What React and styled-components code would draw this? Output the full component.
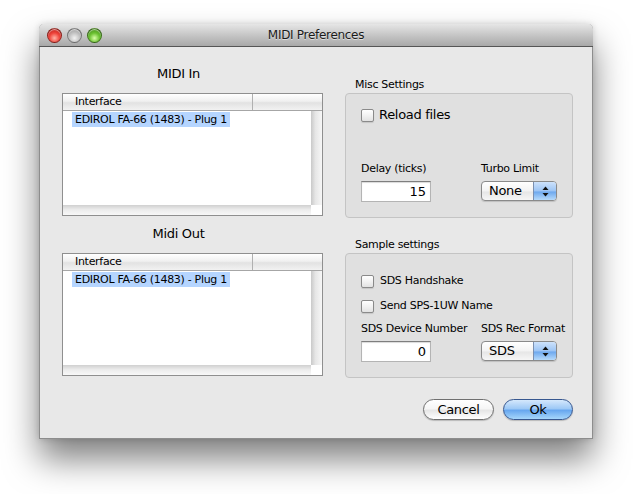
import React from "react";
import styled, { createGlobalStyle } from "styled-components";

const GlobalStyle = createGlobalStyle`
  html, body {
    margin: 0;
    padding: 0;
    background: #ffffff;
  }
  body {
    font-family: "DejaVu Sans", "Liberation Sans", sans-serif;
    color: #000000;
  }
`;

const ArrowsIcon = () => (
  <svg width="7" height="11" viewBox="0 0 7 11">
    <path d="M3.5 0.5 L6.5 4 L0.5 4 Z" fill="#111" />
    <path d="M3.5 10.5 L6.5 7 L0.5 7 Z" fill="#111" />
  </svg>
);

function ListBox({ item }) {
  return (
    <List>
      <ListHeader>
        <HeaderCell $wide>Interface</HeaderCell>
        <HeaderCell />
      </ListHeader>
      <ListBody>
        <ListContent>
          <Row>
            <Selected>{item}</Selected>
          </Row>
        </ListContent>
        <VScroll />
        <HScroll />
        <Corner />
      </ListBody>
    </List>
  );
}

function Checkbox({ label, big }) {
  return (
    <CheckRow $big={big}>
      <CheckBoxMark $big={big} />
      <span>{label}</span>
    </CheckRow>
  );
}

function Popup({ value }) {
  return (
    <PopupButton>
      <PopupText>{value}</PopupText>
      <PopupArrows>
        <ArrowsIcon />
      </PopupArrows>
    </PopupButton>
  );
}

export default function App() {
  return (
    <Page>
      <GlobalStyle />
      <Window>
        <TitleBar>
          <Lights>
            <Light $color="red" />
            <Light $color="gray" />
            <Light $color="green" />
          </Lights>
          <Title>MIDI Preferences</Title>
          <span />
        </TitleBar>
        <Content>
          <Grid>
            <ListLabel>MIDI In</ListLabel>
            <GroupLabel>Misc Settings</GroupLabel>
            <ListBox item="EDIROL FA-66 (1483) - Plug 1" />
            <GroupBox $pad="14px 16px 15px 15px">
              <Checkbox big label="Reload files" />
              <FieldGrid>
                <Field>
                  <SmallLabel>Delay (ticks)</SmallLabel>
                  <TextInput>15</TextInput>
                </Field>
                <Field>
                  <SmallLabel>Turbo Limit</SmallLabel>
                  <Popup value="None" />
                </Field>
              </FieldGrid>
            </GroupBox>
            <ListLabel>Midi Out</ListLabel>
            <GroupLabel>Sample settings</GroupLabel>
            <ListBox item="EDIROL FA-66 (1483) - Plug 1" />
            <GroupBox $pad="20px 16px 15px 15px">
              <Checks>
                <Checkbox label="SDS Handshake" />
                <Checkbox label="Send SPS-1UW Name" />
              </Checks>
              <FieldGrid>
                <Field>
                  <SmallLabel>SDS Device Number</SmallLabel>
                  <TextInput>0</TextInput>
                </Field>
                <Field>
                  <SmallLabel>SDS Rec Format</SmallLabel>
                  <Popup value="SDS" />
                </Field>
              </FieldGrid>
            </GroupBox>
          </Grid>
          <Buttons>
            <PillButton>Cancel</PillButton>
            <PillButton $primary>Ok</PillButton>
          </Buttons>
        </Content>
      </Window>
    </Page>
  );
}

const Page = styled.div`
  width: 633px;
  height: 494px;
  padding: 24px 0 0 39px;
  box-sizing: border-box;
  overflow: hidden;
  background: #ffffff;
`;

const Window = styled.div`
  width: 554px;
  height: 415px;
  display: flex;
  flex-direction: column;
  box-sizing: border-box;
  background: #e8e8e8;
  border: 1px solid #8d8d8d;
  border-top: none;
  border-radius: 5px 5px 0 0;
  box-shadow: 0 20px 34px rgba(0, 0, 0, 0.5), 0 0 6px rgba(0, 0, 0, 0.15);
`;

const TitleBar = styled.div`
  height: 23px;
  display: grid;
  grid-template-columns: 1fr auto 1fr;
  align-items: center;
  box-sizing: border-box;
  border-bottom: 1px solid #555555;
  border-radius: 5px 5px 0 0;
  background: linear-gradient(#e6e6e6, #c6c6c6 50%, #a8a8a8);
  margin: 0 -1px;
`;

const Lights = styled.div`
  display: flex;
  gap: 5px;
  padding-left: 8px;
`;

const lightColors = {
  red: "radial-gradient(circle at 50% 70%, #ffb3a6 0%, #f0453c 45%, #a80f0a 100%)",
  gray: "radial-gradient(circle at 50% 70%, #f2f2f2 0%, #c4c4c4 45%, #8e8e8e 100%)",
  green: "radial-gradient(circle at 50% 70%, #d9ffa8 0%, #6cc232 45%, #357a10 100%)",
};

const Light = styled.div`
  width: 15px;
  height: 15px;
  border-radius: 50%;
  box-sizing: border-box;
  border: 1px solid rgba(0, 0, 0, 0.35);
  background: ${(p) => lightColors[p.$color]};
  box-shadow: inset 0 1px 1px rgba(255, 255, 255, 0.6);
`;

const Title = styled.div`
  font-size: 12px;
  letter-spacing: -0.3px;
  color: #1a1a1a;
  text-shadow: 0 1px 0 rgba(255, 255, 255, 0.5);
`;

const Content = styled.div`
  flex: 1;
  display: flex;
  flex-direction: column;
  padding: 22px 19px 18px 22px;
`;

const Grid = styled.div`
  display: grid;
  grid-template-columns: 261px 228px;
  grid-template-rows: 24px 125px 35px 125px;
  column-gap: 22px;
`;

const ListLabel = styled.div`
  align-self: end;
  padding: 0 28px 11px 0;
  text-align: center;
  font-size: 13px;
  line-height: 16px;
  letter-spacing: -0.3px;
`;

const GroupLabel = styled.div`
  align-self: end;
  padding: 0 0 1px 10px;
  font-size: 11px;
  line-height: 14px;
  letter-spacing: -0.3px;
`;

const List = styled.div`
  height: 123px;
  display: flex;
  flex-direction: column;
  box-sizing: border-box;
  border: 1px solid #8f8f8f;
  background: #ffffff;
`;

const ListHeader = styled.div`
  height: 16px;
  display: flex;
  border-bottom: 1px solid #a6a6a6;
  background: linear-gradient(#ffffff, #f0f0f0 45%, #e2e2e2 55%, #f2f2f2);
`;

const HeaderCell = styled.div`
  width: ${(p) => (p.$wide ? "190px" : "auto")};
  flex: ${(p) => (p.$wide ? "none" : "1")};
  box-sizing: border-box;
  border-right: ${(p) => (p.$wide ? "1px solid #b0b0b0" : "none")};
  padding-left: 12px;
  font-size: 11px;
  line-height: 16px;
  letter-spacing: -0.3px;
`;

const ListBody = styled.div`
  flex: 1;
  display: grid;
  grid-template-columns: 1fr 11px;
  grid-template-rows: 1fr 10px;
`;

const ListContent = styled.div`
  padding-top: 1px;
`;

const Row = styled.div`
  height: 15px;
  display: flex;
  padding-left: 9px;
`;

const Selected = styled.span`
  display: block;
  padding: 0 3px;
  background: #b5d5ff;
  font-size: 11px;
  line-height: 15px;
  letter-spacing: -0.3px;
`;

const VScroll = styled.div`
  background: linear-gradient(90deg, #c9c9c9, #e6e6e6 40%, #f7f7f7);
`;

const HScroll = styled.div`
  background: linear-gradient(#d0d0d0, #ebebeb 45%, #f8f8f8);
`;

const Corner = styled.div`
  background: #ffffff;
`;

const GroupBox = styled.div`
  display: flex;
  flex-direction: column;
  justify-content: space-between;
  box-sizing: border-box;
  padding: ${(p) => p.$pad};
  border: 1px solid #c4c4c4;
  border-radius: 4px;
  background: #e0e0e0;
`;

const Checks = styled.div`
  display: flex;
  flex-direction: column;
  gap: 11px;
`;

const CheckRow = styled.div`
  display: flex;
  align-items: center;
  gap: ${(p) => (p.$big ? "5px" : "6px")};
  font-size: ${(p) => (p.$big ? "13px" : "11px")};
  letter-spacing: -0.3px;
  line-height: 14px;
`;

const CheckBoxMark = styled.div`
  width: 13px;
  height: 13px;
  box-sizing: border-box;
  border: 1px solid #8a8a8a;
  border-radius: 2px;
  background: linear-gradient(#ffffff, #f2f2f2 50%, #e2e2e2);
  box-shadow: 0 1px 1px rgba(0, 0, 0, 0.12);
`;

const FieldGrid = styled.div`
  display: grid;
  grid-template-columns: 120px 1fr;
`;

const Field = styled.div`
  display: flex;
  flex-direction: column;
  gap: 5px;
`;

const SmallLabel = styled.div`
  font-size: 11px;
  line-height: 14px;
  letter-spacing: -0.3px;
  white-space: nowrap;
`;

const TextInput = styled.div`
  width: 70px;
  height: 21px;
  box-sizing: border-box;
  padding-right: 4px;
  text-align: right;
  font-size: 13px;
  line-height: 19px;
  background: #ffffff;
  border: 1px solid #b4b4b4;
  border-top-color: #7e7e7e;
  box-shadow: inset 0 1px 1px rgba(0, 0, 0, 0.15);
`;

const PopupButton = styled.div`
  width: 76px;
  height: 20px;
  display: flex;
  box-sizing: border-box;
  border: 1px solid #8a8a8a;
  border-radius: 4px;
  overflow: hidden;
  background: linear-gradient(#ffffff, #f3f3f3 50%, #e6e6e6 55%, #f6f6f6);
  box-shadow: 0 1px 1px rgba(0, 0, 0, 0.15);
`;

const PopupText = styled.div`
  flex: 1;
  padding-left: 7px;
  font-size: 13px;
  line-height: 18px;
  letter-spacing: -0.3px;
`;

const PopupArrows = styled.div`
  width: 22px;
  display: flex;
  align-items: center;
  justify-content: center;
  border-left: 1px solid #7a8fb0;
  background: linear-gradient(#cde2fb, #9cc4f4 50%, #6da8ee 55%, #b6dafb);
`;

const Buttons = styled.div`
  display: flex;
  justify-content: flex-end;
  gap: 9px;
  margin-top: auto;
`;

const PillButton = styled.div`
  width: ${(p) => (p.$primary ? "70px" : "71px")};
  height: 21px;
  box-sizing: border-box;
  text-align: center;
  font-size: 13px;
  line-height: 19px;
  letter-spacing: -0.3px;
  border-radius: 11px;
  border: 1px solid ${(p) => (p.$primary ? "#37578f" : "#707070")};
  background: ${(p) =>
    p.$primary
      ? "linear-gradient(#d5e8fc, #9ec9f6 45%, #68a7ef 55%, #a6d6fb)"
      : "linear-gradient(#ffffff, #f6f6f6 45%, #e6e6e6 55%, #ffffff)"};
  box-shadow: 0 1px 1px rgba(0, 0, 0, 0.2);
`;
